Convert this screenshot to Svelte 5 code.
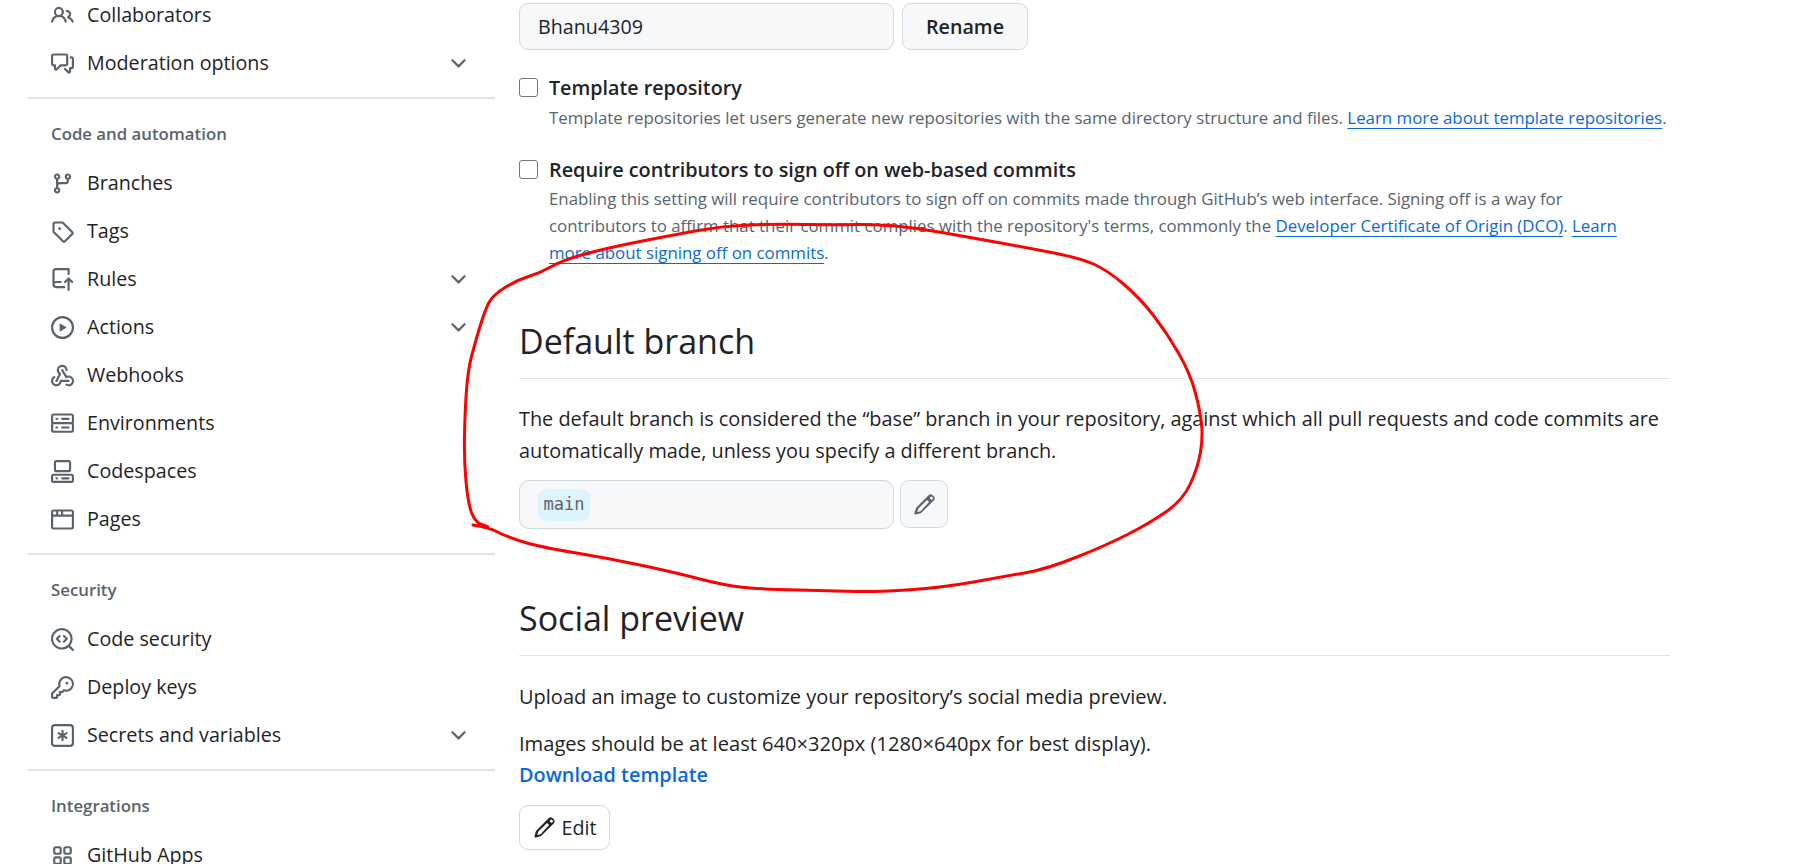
<script>
  const icons = {
    people: ["M2 5.5a3.5 3.5 0 1 1 5.898 2.549 5.508 5.508 0 0 1 3.034 4.084.75.75 0 1 1-1.482.235 4 4 0 0 0-7.9 0 .75.75 0 0 1-1.482-.236A5.507 5.507 0 0 1 3.102 8.05 3.493 3.493 0 0 1 2 5.5ZM11 4a3.001 3.001 0 0 1 2.22 5.018 5.01 5.01 0 0 1 2.56 3.012.749.749 0 0 1-.885.954.752.752 0 0 1-.549-.514 3.507 3.507 0 0 0-2.522-2.372.75.75 0 0 1-.574-.73v-.352a.75.75 0 0 1 .416-.672A1.5 1.5 0 0 0 11 5.5.75.75 0 0 1 11 4Zm-5.5-.5a2 2 0 1 0-.001 3.999A2 2 0 0 0 5.5 3.5Z"],
    discussion: ["M1.75 1h8.5c.966 0 1.75.784 1.75 1.75v5.5A1.75 1.75 0 0 1 10.25 10H7.061l-2.574 2.573A1.458 1.458 0 0 1 2 11.543V10h-.25A1.75 1.75 0 0 1 0 8.25v-5.5C0 1.784.784 1 1.75 1ZM1.5 2.75v5.5c0 .138.112.25.25.25h1a.75.75 0 0 1 .75.75v2.19l2.72-2.72a.749.749 0 0 1 .53-.22h3.5a.25.25 0 0 0 .25-.25v-5.5a.25.25 0 0 0-.25-.25h-8.5a.25.25 0 0 0-.25.25Zm13 2a.25.25 0 0 0-.25-.25h-.5a.75.75 0 0 1 0-1.5h.5c.966 0 1.75.784 1.75 1.75v5.5A1.75 1.75 0 0 1 14.25 12H14v1.543a1.458 1.458 0 0 1-2.487 1.03L9.22 12.28a.749.749 0 0 1 .326-1.275.749.749 0 0 1 .734.215l2.22 2.22v-2.19a.75.75 0 0 1 .75-.75h1a.25.25 0 0 0 .25-.25Z"],
    branch: ["M9.5 3.25a2.25 2.25 0 1 1 3 2.122V6A2.5 2.5 0 0 1 10 8.5H6a1 1 0 0 0-1 1v1.128a2.251 2.251 0 1 1-1.5 0V5.372a2.25 2.25 0 1 1 1.5 0v1.836A2.493 2.493 0 0 1 6 7h4a1 1 0 0 0 1-1v-.628A2.25 2.25 0 0 1 9.5 3.25Zm-6 0a.75.75 0 1 0 1.5 0 .75.75 0 0 0-1.5 0Zm8.25-.75a.75.75 0 1 0 0 1.5.75.75 0 0 0 0-1.5ZM4.25 12a.75.75 0 1 0 0 1.5.75.75 0 0 0 0-1.5Z"],
    tag: ["M1 7.775V2.75C1 1.784 1.784 1 2.75 1h5.025c.464 0 .91.184 1.238.513l6.25 6.25a1.75 1.75 0 0 1 0 2.474l-5.026 5.026a1.75 1.75 0 0 1-2.474 0l-6.25-6.25A1.752 1.752 0 0 1 1 7.775Zm1.5 0c0 .066.026.13.073.177l6.25 6.25a.25.25 0 0 0 .354 0l5.025-5.025a.25.25 0 0 0 0-.354l-6.25-6.25a.25.25 0 0 0-.177-.073H2.75a.25.25 0 0 0-.25.25ZM6 5a1 1 0 1 1 0 2 1 1 0 0 1 0-2Z"],
    rules: ["M1 2.5A2.5 2.5 0 0 1 3.5 0h8.75a.75.75 0 0 1 .75.75v3.5a.75.75 0 0 1-1.5 0V1.5h-8a1 1 0 0 0-1 1v6.708A2.493 2.493 0 0 1 3.5 9h3.25a.75.75 0 0 1 0 1.5H3.5a1 1 0 0 0 0 2h5.75a.75.75 0 0 1 0 1.5H3.5A2.5 2.5 0 0 1 1 11.5Zm13.23 7.79h-.001l-1.224-1.224v6.184a.75.75 0 0 1-1.5 0V9.066L10.28 10.29a.75.75 0 0 1-1.06-1.061l2.505-2.504a.75.75 0 0 1 1.06 0L15.29 9.23a.751.751 0 0 1-.018 1.042.751.751 0 0 1-1.042.018Z"],
    play: ["M8 0a8 8 0 1 1 0 16A8 8 0 0 1 8 0ZM1.5 8a6.5 6.5 0 1 0 13 0 6.5 6.5 0 0 0-13 0Zm4.879-2.773 4.264 2.559a.25.25 0 0 1 0 .428l-4.264 2.559A.25.25 0 0 1 6 10.559V5.442a.25.25 0 0 1 .379-.215Z"],
    webhook: ["M5.5 4.25a2.25 2.25 0 0 1 4.5 0 .75.75 0 0 0 1.5 0 3.75 3.75 0 1 0-6.14 2.889l-2.272 4.258a.75.75 0 0 0 1.324.706L7 7.25a.75.75 0 0 0-.309-1.015A2.25 2.25 0 0 1 5.5 4.25Z", "M7.364 3.607a.75.75 0 0 1 1.03.257l2.608 4.349a3.75 3.75 0 1 1-.628 6.785.75.75 0 0 1 .752-1.299 2.25 2.25 0 1 0-.033-3.88.75.75 0 0 1-1.03-.256L7.107 4.636a.75.75 0 0 1 .257-1.03Z", "M2.9 8.776A.75.75 0 0 1 2.625 9.8 2.25 2.25 0 1 0 6 11.75a.75.75 0 0 1 .75-.751h5.5a.75.75 0 0 1 0 1.5H7.425a3.751 3.751 0 1 1-5.55-3.998.75.75 0 0 1 1.024.274Z"],
    server: ["M1.75 1h12.5c.966 0 1.75.784 1.75 1.75v4c0 .372-.116.717-.314 1 .198.283.314.628.314 1v4a1.75 1.75 0 0 1-1.75 1.75H1.75A1.75 1.75 0 0 1 0 13.25v-4c0-.372.116-.717.314-1a1.739 1.739 0 0 1-.314-1v-4C0 1.784.784 1 1.75 1ZM1.5 2.75v4c0 .138.112.25.25.25h12.5a.25.25 0 0 0 .25-.25v-4a.25.25 0 0 0-.25-.25H1.75a.25.25 0 0 0-.25.25Zm.25 5.75a.25.25 0 0 0-.25.25v4c0 .138.112.25.25.25h12.5a.25.25 0 0 0 .25-.25v-4a.25.25 0 0 0-.25-.25ZM7 4.75A.75.75 0 0 1 7.75 4h4.5a.75.75 0 0 1 0 1.5h-4.5A.75.75 0 0 1 7 4.75ZM7.75 10h4.5a.75.75 0 0 1 0 1.5h-4.5a.75.75 0 0 1 0-1.5ZM3 4.75A.75.75 0 0 1 3.75 4h.5a.75.75 0 0 1 0 1.5h-.5A.75.75 0 0 1 3 4.75ZM3.75 10h.5a.75.75 0 0 1 0 1.5h-.5a.75.75 0 0 1 0-1.5Z"],
    codespaces: ["M0 11.25c0-.966.784-1.75 1.75-1.75h12.5c.966 0 1.75.784 1.75 1.75v3A1.75 1.75 0 0 1 14.25 16H1.75A1.75 1.75 0 0 1 0 14.25Zm2-9.5C2 .784 2.784 0 3.75 0h8.5C13.216 0 14 .784 14 1.75v5a1.75 1.75 0 0 1-1.75 1.75h-8.5A1.75 1.75 0 0 1 2 6.75Zm1.75-.25a.25.25 0 0 0-.25.25v5c0 .138.112.25.25.25h8.5a.25.25 0 0 0 .25-.25v-5a.25.25 0 0 0-.25-.25Zm-2 9.5a.25.25 0 0 0-.25.25v3c0 .138.112.25.25.25h12.5a.25.25 0 0 0 .25-.25v-3a.25.25 0 0 0-.25-.25Z", "M7 12.75a.75.75 0 0 1 .75-.75h4.5a.75.75 0 0 1 0 1.5h-4.5a.75.75 0 0 1-.75-.75Zm-4 0a.75.75 0 0 1 .75-.75h.5a.75.75 0 0 1 0 1.5h-.5a.75.75 0 0 1-.75-.75Z"],
    browser: ["M0 2.75C0 1.784.784 1 1.75 1h12.5c.966 0 1.75.784 1.75 1.75v10.5A1.75 1.75 0 0 1 14.25 15H1.75A1.75 1.75 0 0 1 0 13.25ZM14.5 6h-13v7.25c0 .138.112.25.25.25h12.5a.25.25 0 0 0 .25-.25Zm-6-3.5v2h6v-1.75a.25.25 0 0 0-.25-.25ZM5 2.5v2h2v-2Zm-3.25 0a.25.25 0 0 0-.25.25V4.5h2v-2Z"],
    codescan: ["M8.47 4.97a.75.75 0 0 0 0 1.06L9.94 7.5 8.47 8.97a.75.75 0 1 0 1.06 1.06l2-2a.75.75 0 0 0 0-1.06l-2-2a.75.75 0 0 0-1.06 0ZM6.53 6.03a.75.75 0 0 0-1.06-1.06l-2 2a.75.75 0 0 0 0 1.06l2 2a.75.75 0 1 0 1.06-1.06L5.06 7.5l1.47-1.47Z", "M12.246 13.307a7.501 7.501 0 1 1 1.06-1.06l2.474 2.473a.749.749 0 0 1-.326 1.275.749.749 0 0 1-.734-.215ZM1.5 7.5a6.002 6.002 0 0 0 3.608 5.504 6.002 6.002 0 0 0 6.486-1.117.748.748 0 0 1 .292-.293A6 6 0 1 0 1.5 7.5Z"],
    key: ["M10.5 0a5.499 5.499 0 1 1-1.288 10.848l-.932.932a.749.749 0 0 1-.53.22H7v.75a.749.749 0 0 1-.22.53l-.5.5a.749.749 0 0 1-.53.22H5v.75a.749.749 0 0 1-.22.53l-.5.5a.749.749 0 0 1-.53.22h-2A1.75 1.75 0 0 1 0 14.25v-2c0-.199.079-.389.22-.53l4.932-4.932A5.5 5.5 0 0 1 10.5 0Zm-4 5.5c-.001.431.069.86.205 1.269a.75.75 0 0 1-.181.768L1.5 12.56v1.69c0 .138.112.25.25.25h1.69l.06-.06v-1.19a.75.75 0 0 1 .75-.75h1.19l.06-.06v-1.19a.75.75 0 0 1 .75-.75h1.19l1.023-1.025a.75.75 0 0 1 .768-.18A4 4 0 1 0 6.5 5.5ZM11 6a1 1 0 1 1 0-2 1 1 0 0 1 0 2Z"],
    asterisk: ["M0 2.75A2.75 2.75 0 0 1 2.75 0h10.5A2.75 2.75 0 0 1 16 2.75v10.5A2.75 2.75 0 0 1 13.25 16H2.75A2.75 2.75 0 0 1 0 13.25ZM2.75 1.5c-.69 0-1.25.56-1.25 1.25v10.5c0 .69.56 1.25 1.25 1.25h10.5c.69 0 1.25-.56 1.25-1.25V2.75c0-.69-.56-1.25-1.25-1.25Z", "M8 4a.75.75 0 0 1 .75.75V6.7l1.69-.975a.75.75 0 0 1 .75 1.3L9.5 8l1.69.976a.75.75 0 0 1-.75 1.298L8.75 9.3v1.951a.75.75 0 0 1-1.5 0V9.299l-1.69.976a.75.75 0 0 1-.75-1.3L6.5 8l-1.69-.975a.75.75 0 0 1 .75-1.3l1.69.976V4.75A.75.75 0 0 1 8 4Z"],
    apps: ["M1.5 3.25c0-.966.784-1.75 1.75-1.75h2.5c.966 0 1.75.784 1.75 1.75v2.5A1.75 1.75 0 0 1 5.75 7.5h-2.5A1.75 1.75 0 0 1 1.5 5.75Zm7 0c0-.966.784-1.75 1.75-1.75h2.5c.966 0 1.75.784 1.75 1.75v2.5a1.75 1.75 0 0 1-1.75 1.75h-2.5A1.75 1.75 0 0 1 8.5 5.75Zm-7 7c0-.966.784-1.75 1.75-1.75h2.5c.966 0 1.75.784 1.75 1.75v2.5a1.75 1.75 0 0 1-1.75 1.75h-2.5a1.75 1.75 0 0 1-1.75-1.75Zm7 0c0-.966.784-1.75 1.75-1.75h2.5c.966 0 1.75.784 1.75 1.75v2.5a1.75 1.75 0 0 1-1.75 1.75h-2.5a1.75 1.75 0 0 1-1.75-1.75ZM3.25 3a.25.25 0 0 0-.25.25v2.5c0 .138.112.25.25.25h2.5A.25.25 0 0 0 6 5.75v-2.5A.25.25 0 0 0 5.75 3Zm7 0a.25.25 0 0 0-.25.25v2.5c0 .138.112.25.25.25h2.5a.25.25 0 0 0 .25-.25v-2.5a.25.25 0 0 0-.25-.25ZM3 10.25v2.5c0 .138.112.25.25.25h2.5a.25.25 0 0 0 .25-.25v-2.5a.25.25 0 0 0-.25-.25h-2.5a.25.25 0 0 0-.25.25Zm7.25-.25a.25.25 0 0 0-.25.25v2.5c0 .138.112.25.25.25h2.5a.25.25 0 0 0 .25-.25v-2.5a.25.25 0 0 0-.25-.25Z"],
    pencil: ["M11.013 1.427a1.75 1.75 0 0 1 2.474 0l1.086 1.086a1.75 1.75 0 0 1 0 2.474l-8.61 8.61c-.21.21-.47.364-.756.445l-3.251.93a.75.75 0 0 1-.927-.928l.929-3.25c.081-.286.235-.547.445-.758l8.61-8.61Zm.176 4.823L9.75 4.81l-6 6a.749.749 0 0 0-.19.324l-.62 2.17 2.17-.62a.75.75 0 0 0 .32-.19ZM11.5 3.5l1.44 1.44 1.06-1.06a.25.25 0 0 0 0-.354l-1.086-1.086a.25.25 0 0 0-.354 0Z"],
    chevron: ["M12.78 5.22a.749.749 0 0 1 0 1.06l-4.25 4.25a.749.749 0 0 1-1.06 0L3.22 6.28a.749.749 0 1 1 1.06-1.06L8 8.939l3.72-3.719a.749.749 0 0 1 1.06 0Z"]
  };

  const groups = [
    { items: [{ t: "Collaborators", i: "people" }, { t: "Moderation options", i: "discussion", more: true }] },
    { label: "Code and automation", items: [
      { t: "Branches", i: "branch" }, { t: "Tags", i: "tag" }, { t: "Rules", i: "rules", more: true },
      { t: "Actions", i: "play", more: true }, { t: "Webhooks", i: "webhook" }, { t: "Environments", i: "server" },
      { t: "Codespaces", i: "codespaces" }, { t: "Pages", i: "browser" }
    ] },
    { label: "Security", items: [{ t: "Code security", i: "codescan" }, { t: "Deploy keys", i: "key" }, { t: "Secrets and variables", i: "asterisk", more: true }] },
    { label: "Integrations", items: [{ t: "GitHub Apps", i: "apps" }] }
  ];

  // hand-drawn annotation round the default branch section
  const pts = [[473,525],[488,527],[507,537],[540,547],[607,558],[673,572],[723,585],[757,589],[840,591],[873,592],[940,588],[1007,576],[1047,569],[1107,545],[1150,523],[1183,500],[1198,467],[1203,437],[1200,410],[1190,373],[1167,333],[1140,298],[1107,270],[1080,258],[1023,247],[973,238],[917,228],[873,224],[840,225],[773,224],[723,226],[673,235],[607,248],[563,260],[540,273],[517,280],[493,295],[485,310],[475,343],[468,370],[465,410],[464,460],[468,503],[475,522],[488,527]];
  let ring = `M${pts[0][0]} ${pts[0][1]}`;
  for (let i = 1; i < pts.length - 1; i++) {
    const mx = (pts[i][0] + pts[i + 1][0]) / 2;
    const my = (pts[i][1] + pts[i + 1][1]) / 2;
    ring += ` Q${pts[i][0]} ${pts[i][1]} ${mx} ${my}`;
  }
  ring += ` L${pts[pts.length - 1][0]} ${pts[pts.length - 1][1]}`;
</script>

{#snippet icon(name, cls)}
  <svg class={cls} viewBox="0 0 16 16" aria-hidden="true">
    {#each icons[name] as d}<path {d} />{/each}
  </svg>
{/snippet}

<div class="page">
  <nav class="side">
    {#each groups as g, n}
      {#if n > 0}<div class="rule"></div>{/if}
      {#if g.label}<div class="label">{g.label}</div>{/if}
      {#each g.items as it}
        <div class="row">
          {@render icon(it.i, "ico")}
          <span class="name">{it.t}</span>
          {#if it.more}{@render icon("chevron", "chev")}{/if}
        </div>
      {/each}
    {/each}
  </nav>

  <main class="main">
    <div class="line">
      <div class="input">Bhanu4309</div>
      <button class="btn rename">Rename</button>
    </div>

    <div class="check first">
      <span class="box"></span>
      <div>
        <div class="title">Template repository</div>
        <div class="hint">Template repositories let users generate new repositories with the same directory structure and files. <a href="#a">Learn more about template repositories</a>.</div>
      </div>
    </div>

    <div class="check second">
      <span class="box"></span>
      <div>
        <div class="title">Require contributors to sign off on web-based commits</div>
        <div class="hint">Enabling this setting will require contributors to sign off on commits made through GitHub’s web interface. Signing off is a way for<br />contributors to affirm that their commit complies with the repository's terms, commonly the <a href="#a">Developer Certificate of Origin (DCO)</a>. <a href="#a">Learn</a><br /><a href="#a">more about signing off on commits</a>.</div>
      </div>
    </div>

    <h2 class="head branch">Default branch</h2>
    <p class="para">The default branch is considered the “base” branch in your repository, against which all pull requests and code commits are<br />automatically made, unless you specify a different branch.</p>
    <div class="line pick">
      <div class="input short"><code>main</code></div>
      <button class="btn square">{@render icon("pencil", "ico pen")}</button>
    </div>

    <h2 class="head social">Social preview</h2>
    <p class="para upload">Upload an image to customize your repository’s social media preview.</p>
    <p class="para sizes">Images should be at least 640×320px (1280×640px for best display).</p>
    <a class="download" href="#a">Download template</a>
    <button class="btn edit">{@render icon("pencil", "ico pen2")}Edit</button>
  </main>

  <svg class="ring" viewBox="0 0 1796 864" aria-hidden="true"><path d={ring} /></svg>
</div>

<style>
  :global(body) {
    background: #fff;
  }

  .page {
    position: relative;
    display: flex;
    width: 1796px;
    height: 864px;
    overflow: hidden;
    color: #1f2328;
    font-family: "Open Sans", "Noto Sans", sans-serif;
    font-size: 19.7px;
    background: #fff;
  }

  .side {
    flex: none;
    width: 467px;
    margin: -9px 0 0 28px;
  }

  .row {
    display: flex;
    align-items: center;
    height: 48px;
    padding-left: 23px;
  }

  .ico {
    flex: none;
    width: 23px;
    height: 23px;
    fill: #59636e;
  }

  .chev {
    width: 23px;
    height: 23px;
    margin-left: auto;
    margin-right: 25px;
    fill: #59636e;
  }

  .name {
    margin: 0 0 2px 13px;
    white-space: nowrap;
  }

  .rule {
    height: 2px;
    margin-top: 10px;
    background: #dfe4e9;
  }

  .label {
    height: 24px;
    margin: 23px 0 13px;
    padding-left: 23px;
    color: #59636e;
    font-size: 16.8px;
    font-weight: 600;
    line-height: 24px;
  }

  .main {
    flex: none;
    width: 1151px;
    margin-left: 24px;
    padding-top: 3px;
  }

  .line {
    display: flex;
    gap: 8px;
  }

  .input {
    box-sizing: border-box;
    display: flex;
    align-items: center;
    width: 375px;
    height: 47px;
    padding-left: 18px;
    border: 1px solid #d1d9e0;
    border-radius: 9px;
    background: #f6f8fa;
  }

  .btn {
    box-sizing: border-box;
    display: flex;
    align-items: center;
    justify-content: center;
    border: 1px solid #d1d9e0;
    border-radius: 9px;
    background: #f6f8fa;
    color: #1f2328;
    font: inherit;
    font-weight: 600;
  }

  .rename {
    width: 126px;
    height: 47px;
  }

  .check {
    position: relative;
    padding-left: 30px;
    white-space: nowrap;
  }

  .first {
    margin-top: 23px;
  }

  .first .hint {
    margin-top: 1px;
  }

  .second {
    margin-top: 24px;
  }

  .second .title {
    font-size: 19.85px;
  }

  .box {
    position: absolute;
    left: 0;
    top: 5px;
    box-sizing: border-box;
    width: 19px;
    height: 19px;
    border: 1px solid #767676;
    border-radius: 3px;
    background: #fff;
  }

  .title {
    font-weight: 600;
    line-height: 30px;
  }

  .hint {
    color: #59636e;
    font-size: 16.85px;
    line-height: 27px;
  }

  .hint a {
    color: #0969da;
    text-decoration: underline;
    text-underline-offset: 4px;
  }

  .head {
    margin: 0;
    padding-bottom: 13px;
    border-bottom: 1px solid #dfe4e9;
    font-size: 34px;
    font-weight: 400;
    line-height: 48px;
  }

  .branch {
    margin-top: 51px;
  }

  .para {
    margin: 24px 0 0;
    font-size: 19.87px;
    line-height: 32px;
    white-space: nowrap;
  }

  .pick {
    gap: 6px;
    margin-top: 13px;
  }

  .short {
    width: 375px;
    height: 49px;
    border-radius: 10px;
  }

  code {
    padding: 5px 5.5px 6px;
    border-radius: 9px;
    background: #ddf4ff;
    color: #59636e;
    font-family: "DejaVu Sans Mono", monospace;
    font-size: 17px;
    line-height: 21px;
  }

  .square {
    width: 48px;
    height: 48px;
  }

  .pen {
    width: 23px;
    height: 23px;
  }

  .social {
    margin-top: 65px;
  }

  .upload {
    margin-top: 25px;
    font-size: 20px;
  }

  .sizes {
    margin-top: 15px;
    font-size: 20.1px;
  }

  .download {
    display: block;
    color: #0969da;
    font-size: 19.85px;
    font-weight: 600;
    line-height: 30px;
    text-decoration: none;
  }

  .edit {
    gap: 6px;
    width: 91px;
    height: 45px;
    margin-top: 15px;
    background: #fff;
    font-weight: 400;
  }

  .pen2 {
    width: 23px;
    height: 23px;
    fill: #1f2328;
  }

  .ring {
    position: absolute;
    left: 0;
    top: 0;
    width: 1796px;
    height: 864px;
    pointer-events: none;
  }

  .ring path {
    fill: none;
    stroke: #fe0000;
    stroke-width: 3;
    stroke-linecap: round;
    stroke-linejoin: round;
  }
</style>
